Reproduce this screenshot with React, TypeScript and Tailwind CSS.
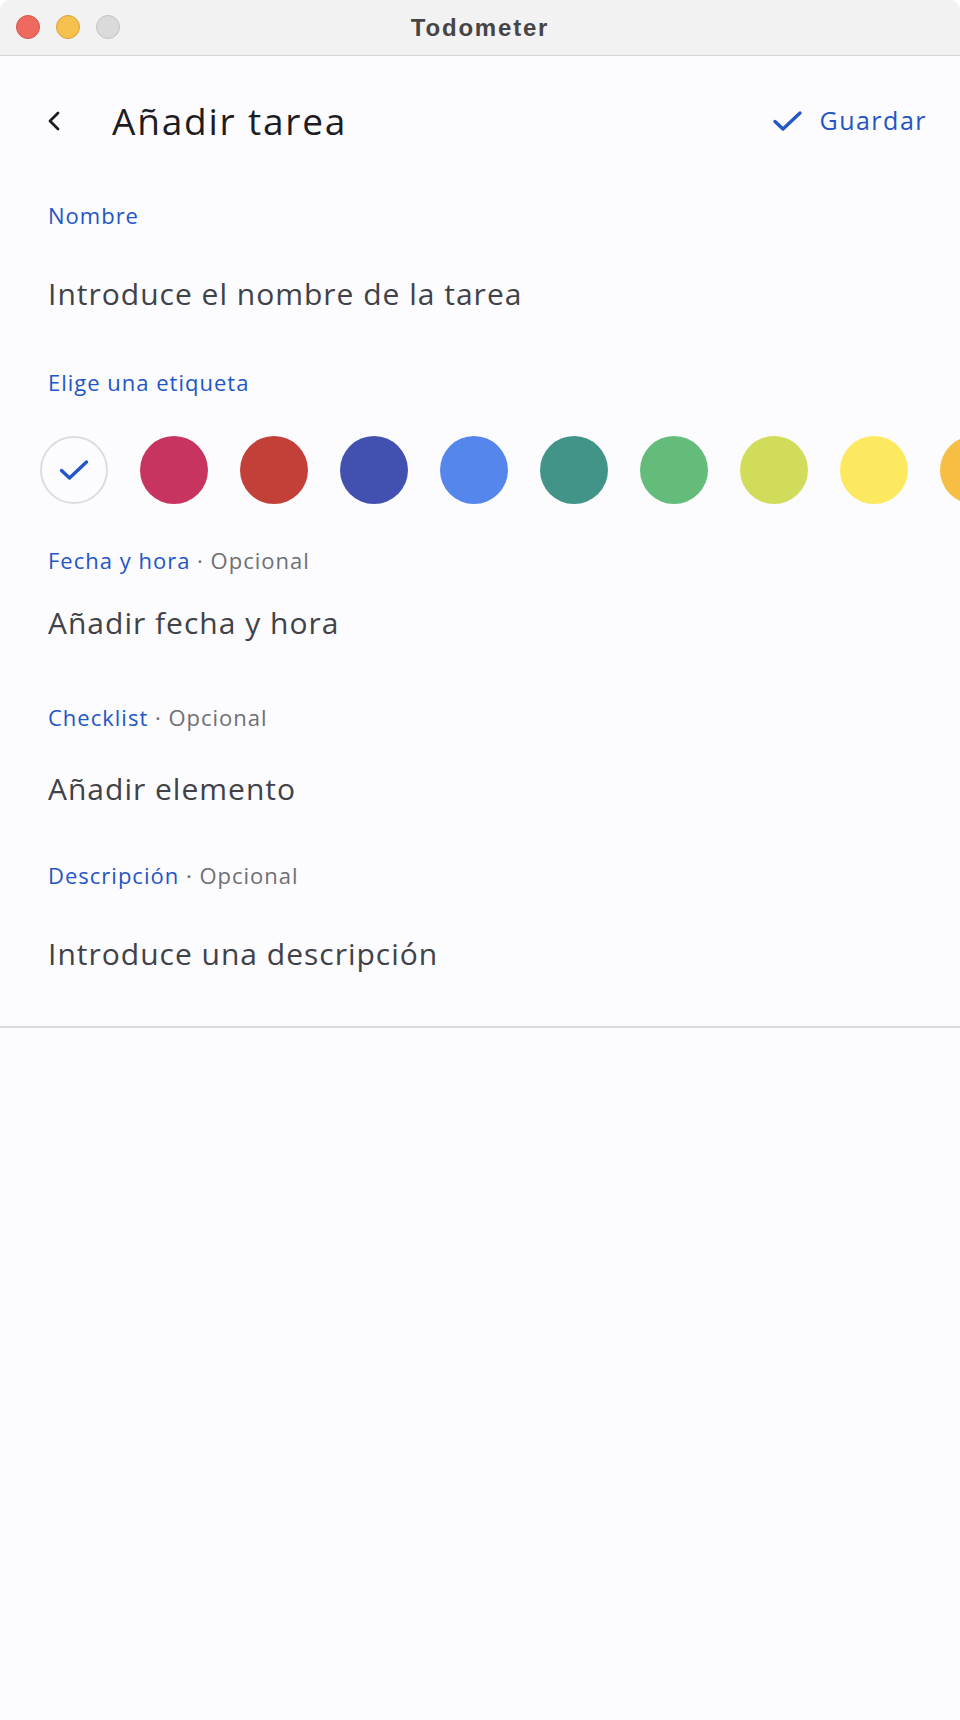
const COLORS = [
  '#c6345f',
  '#c24037',
  '#4251b0',
  '#5486ec',
  '#429488',
  '#63bc7a',
  '#d1dc5a',
  '#fde95f',
  '#f6be42',
]

function Label({ text, optional }: { text: string; optional?: boolean }) {
  return (
    <div className="px-[48px] text-[22px] leading-[28px] tracking-[1px] text-[#2356c4]">
      {text}
      {optional && <span className="text-[#6f6f74]"> · Opcional</span>}
    </div>
  )
}

function Placeholder({ text }: { text: string }) {
  return (
    <div className="px-[48px] text-[30px] leading-[36px] tracking-[1px] text-[#404248]">
      {text}
    </div>
  )
}

function CheckIcon({ className }: { className?: string }) {
  return (
    <svg viewBox="0 0 30 22" className={className} fill="none">
      <path
        d="M2.5 11.5 L10.5 19 L27.5 3"
        stroke="#2457c5"
        strokeWidth="3.4"
        strokeLinecap="round"
        strokeLinejoin="round"
      />
    </svg>
  )
}

export default function App() {
  return (
    <div
      className="min-h-[1720px] w-[960px] bg-white"
      style={{ fontFamily: '"Open Sans", Lato, sans-serif' }}
    >
      <div className="flex min-h-[1720px] flex-col overflow-hidden rounded-t-[11px] bg-[#fcfbfe]">
        {/* title bar */}
        <div className="relative flex h-[56px] items-center justify-center border-b border-[#d6d6d6] bg-[#f2f2f2]">
          <div className="absolute left-[16px] top-[15px] flex gap-[16px]">
            <span className="size-[24px] rounded-full border border-[#d5544b] bg-[#ee6a5f]" />
            <span className="size-[24px] rounded-full border border-[#d9a23c] bg-[#f6c04f]" />
            <span className="size-[24px] rounded-full border border-[#c3c3c3] bg-[#dadada]" />
          </div>
          <span
            className="text-[24px] font-bold tracking-[1.8px] text-[#454545]"
            style={{ fontFamily: '"Liberation Sans", Arial, sans-serif' }}
          >
            Todometer
          </span>
        </div>

        {/* header */}
        <div className="flex h-[130px] items-center justify-between pl-[46px] pr-[33px]">
          <div className="flex items-center">
            <svg viewBox="0 0 16 20" className="h-[20px] w-[16px]" fill="none">
              <path
                d="M12 2 L4 10 L12 18"
                stroke="#1c1c22"
                strokeWidth="2.8"
                strokeLinecap="round"
                strokeLinejoin="round"
              />
            </svg>
            <h1 className="ml-[50px] text-[37px] leading-[44px] tracking-[1.8px] text-[#1c1c22]">
              Añadir tarea
            </h1>
          </div>
          <div className="flex items-center gap-[16px]">
            <CheckIcon className="h-[22px] w-[31px]" />
            <span className="text-[25px] tracking-[1.5px] text-[#2356c4]">Guardar</span>
          </div>
        </div>

        <div className="mt-[15px]">
          <Label text="Nombre" />
        </div>
        <div className="mt-[47px]">
          <Placeholder text="Introduce el nombre de la tarea" />
        </div>
        <div className="mt-[56px]">
          <Label text="Elige una etiqueta" />
        </div>

        {/* colour labels */}
        <div className="mt-[40px] flex gap-[32px] overflow-hidden pl-[40px]">
          <div className="flex size-[68px] shrink-0 items-center justify-center rounded-full border-2 border-[#dddcdf]">
            <CheckIcon className="h-[22px] w-[30px]" />
          </div>
          {COLORS.map((c) => (
            <span
              key={c}
              className="size-[68px] shrink-0 rounded-full"
              style={{ backgroundColor: c }}
            />
          ))}
        </div>

        <div className="mt-[42px]">
          <Label text="Fecha y hora" optional />
        </div>
        <div className="mt-[31px]">
          <Placeholder text="Añadir fecha y hora" />
        </div>
        <div className="mt-[62px]">
          <Label text="Checklist" optional />
        </div>
        <div className="mt-[40px]">
          <Placeholder text="Añadir elemento" />
        </div>
        <div className="mt-[54px]">
          <Label text="Descripción" optional />
        </div>
        <div className="mt-[47px]">
          <Placeholder text="Introduce una descripción" />
        </div>

        <div className="mt-[54px] h-[2px] bg-[#dadada]" />
      </div>
    </div>
  )
}
